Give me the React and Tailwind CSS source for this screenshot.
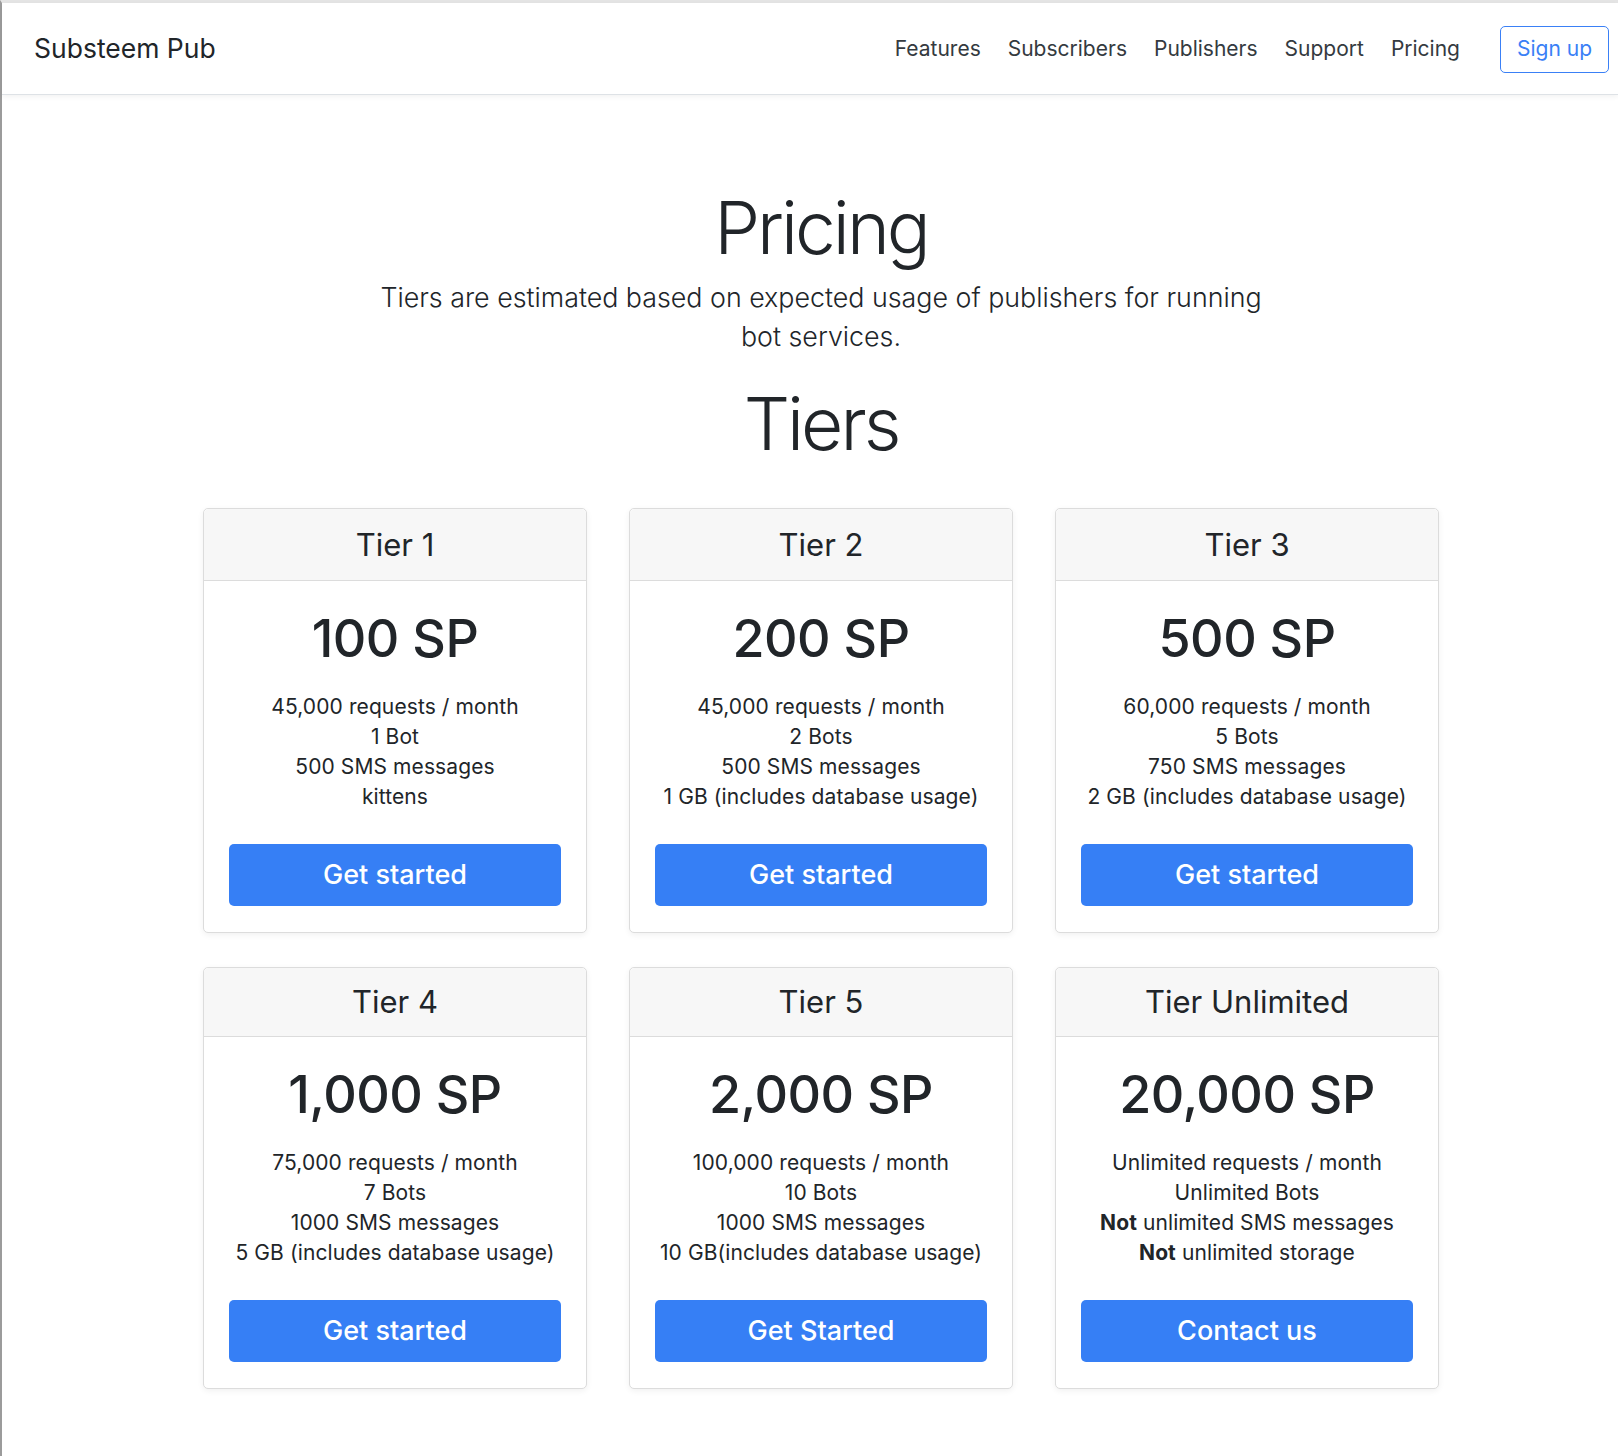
const tiers = [
  {
    name: "Tier 1",
    price: "100 SP",
    features: ["45,000 requests / month", "1 Bot", "500 SMS messages", "kittens"],
    cta: "Get started",
  },
  {
    name: "Tier 2",
    price: "200 SP",
    features: [
      "45,000 requests / month",
      "2 Bots",
      "500 SMS messages",
      "1 GB (includes database usage)",
    ],
    cta: "Get started",
  },
  {
    name: "Tier 3",
    price: "500 SP",
    features: [
      "60,000 requests / month",
      "5 Bots",
      "750 SMS messages",
      "2 GB (includes database usage)",
    ],
    cta: "Get started",
  },
  {
    name: "Tier 4",
    price: "1,000 SP",
    features: [
      "75,000 requests / month",
      "7 Bots",
      "1000 SMS messages",
      "5 GB (includes database usage)",
    ],
    cta: "Get started",
  },
  {
    name: "Tier 5",
    price: "2,000 SP",
    features: [
      "100,000 requests / month",
      "10 Bots",
      "1000 SMS messages",
      "10 GB(includes database usage)",
    ],
    cta: "Get Started",
  },
  {
    name: "Tier Unlimited",
    price: "20,000 SP",
    features: [
      "Unlimited requests / month",
      "Unlimited Bots",
      <>
        <b className="font-bold">Not</b> unlimited SMS messages
      </>,
      <>
        <b className="font-bold">Not</b> unlimited storage
      </>,
    ],
    cta: "Contact us",
  },
];

const links = ["Features", "Subscribers", "Publishers", "Support", "Pricing"];

function TierCard({ tier, compact }) {
  return (
    <div className="flex flex-col rounded-[5px] border border-[#dcdcdc] bg-white text-center shadow-[0_2px_6px_rgba(0,0,0,0.06)]">
      {/* Header */}
      <div
        className={`flex items-center justify-center rounded-t-[5px] border-b border-[#dcdcdc] bg-[#f7f7f7] ${
          compact ? "h-[69px]" : "h-[72px]"
        }`}
      >
        <h4 className="text-[31px] font-normal leading-[38px]">{tier.name}</h4>
      </div>

      {/* Body */}
      <div className="px-[25px] pb-[26px] pt-[26px]">
        <h1 className="text-[52px] font-medium leading-[64px] tracking-[-0.5px]">
          {tier.price}
        </h1>
        <ul className="mt-[21px] text-[21px] leading-[30px] tracking-[0.1px]">
          {tier.features.map((f, i) => (
            <li key={i}>{f}</li>
          ))}
        </ul>
        <button className="mt-[32px] flex h-[62px] w-full items-center justify-center rounded-[5px] bg-[#367ff5] text-[27px] font-medium text-white">
          {tier.cta}
        </button>
      </div>
    </div>
  );
}

export default function App() {
  return (
    <div className="min-h-screen border-l-2 border-t-[3px] border-l-[#9b9b9b] border-t-[#e4e4e4] bg-white font-['Inter',sans-serif] text-[#212529]">
      {/* Top Bar */}
      <header className="flex h-[92px] items-center justify-between border-b border-[#dee2e6] bg-white pl-[32px] pr-[9px] shadow-[0_2px_5px_rgba(0,0,0,0.05)]">
        <h5 className="pt-px text-[26.5px] font-normal">Substeem Pub</h5>

        <nav className="flex items-center pt-px">
          <div className="flex items-center gap-[27px] text-[21px] text-[#343a40]">
            {links.map((l) => (
              <a key={l} href="#">
                {l}
              </a>
            ))}
          </div>
          <a
            href="#"
            className="ml-[40px] flex h-[47px] w-[109px] items-center justify-center rounded-[5px] border-[1.5px] border-[#3a80f6] text-[21px] text-[#3a80f6]"
          >
            Sign up
          </a>
        </nav>
      </header>

      <main className="pl-[22px]">
        <div className="mx-auto flex w-[1236px] flex-col items-center pb-[60px] pt-[88px]">
          <h1 className="text-[73px] font-light leading-[90px] tracking-[-3px]">
            Pricing
          </h1>
          <p className="mt-[5px] w-[905px] text-center text-[26.8px] font-light leading-[39px]">
            Tiers are estimated based on expected usage of publishers for
            running bot services.
          </p>
          <h1 className="mt-[23px] text-[73px] font-light leading-[90px] tracking-[-3px]">
            Tiers
          </h1>

          {/* Tier cards */}
          <div className="mt-[39px] grid w-full grid-cols-3 gap-x-[42px] gap-y-[34px]">
            {tiers.map((t, i) => (
              <TierCard key={t.name} tier={t} compact={i >= 3} />
            ))}
          </div>
        </div>
      </main>
    </div>
  );
}
